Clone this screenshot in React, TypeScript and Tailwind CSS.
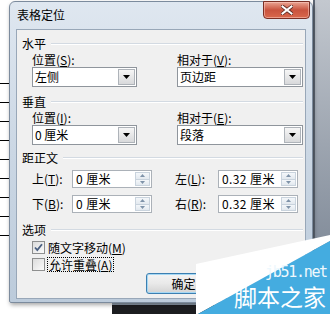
import React from 'react';

function Key({ k }: { k: string }) {
    return (
        <>
            (<span className="underline underline-offset-1">{k}</span>)
        </>
    );
}

function Group({ title, className }: { title: string; className: string }) {
    return (
        <div className={`flex h-[14px] items-center pl-[5px] pr-[2px] leading-[14px] ${className}`}>
            <span>{title}</span>
            <span className="ml-[5px] h-[2px] flex-1 border-t border-b border-t-[#d3dae2] border-b-white" />
        </div>
    );
}

function Combo({ value, width }: { value: string; width: string }) {
    return (
        <div className={`flex h-[20px] items-stretch border border-[#8f959c] bg-white ${width}`}>
            <span className="flex-1 pl-[2px] leading-[18px]">{value}</span>
            <span className="m-px flex w-[17px] items-center justify-center border border-[#aeb3b9] bg-gradient-to-b from-[#f6f6f6] to-[#d8d9db]">
                <svg width="7" height="4" viewBox="0 0 7 4">
                    <path d="M0 0h7L3.5 4z" fill="#000" />
                </svg>
            </span>
        </div>
    );
}

function Spin({ value }: { value: string }) {
    return (
        <div className="flex h-[18px] w-[80px] border border-[#abb1b8] bg-white">
            <span className="flex-1 pl-[3px] leading-[16px] tracking-[0.4px]">{value}</span>
            <span className="my-px mr-px flex w-[15px] flex-col">
                <span className="flex flex-1 items-center justify-center border border-[#c9d3dd] bg-gradient-to-b from-[#f4f7fa] to-[#e3e9ef]">
                    <svg width="5" height="3" viewBox="0 0 5 3">
                        <path d="M0 3h5L2.5 0z" fill="#7f93a9" />
                    </svg>
                </span>
                <span className="flex flex-1 items-center justify-center border border-t-0 border-[#c9d3dd] bg-gradient-to-b from-[#f4f7fa] to-[#e3e9ef]">
                    <svg width="5" height="3" viewBox="0 0 5 3">
                        <path d="M0 0h5L2.5 3z" fill="#7f93a9" />
                    </svg>
                </span>
            </span>
        </div>
    );
}

function Check({ checked }: { checked: boolean }) {
    return (
        <span className="flex h-[13px] w-[13px] items-center justify-center border border-[#8e8f8f] bg-gradient-to-br from-[#dcdcdc] to-[#fbfbfb]">
            {checked && (
                <svg width="9" height="9" viewBox="0 0 9 9">
                    <path d="M1 4.5l2.3 2.6L8 1.2" fill="none" stroke="#4a5f80" strokeWidth="1.8" />
                </svg>
            )}
        </span>
    );
}

export default function App() {
    const docLines = [0, 1, 2, 3, 4, 5, 6, 7, 8];

    return (
        <div className="relative h-[314px] w-[330px] overflow-hidden bg-white font-['Noto_Sans_CJK_SC','Noto_Sans',sans-serif] text-[12px] text-black">
            {/* document behind the dialog */}
            <div className="flex w-[9px] flex-col pt-[83px]">
                {docLines.map((i) => (
                    <div key={i} className="mb-[18px] h-px bg-black" />
                ))}
            </div>

            <div className="absolute right-0 top-0 h-[303px] w-[17px] border-l-2 border-[#5d6673] bg-gradient-to-b from-[#c3c8cf] to-[#75808f]" />
            <div className="absolute bottom-0 left-[112px] right-0 h-[11px] border-t-2 border-[#8d9bab] bg-[#1c1d20]" />

            {/* dialog window */}
            <div className="absolute left-[9px] top-[1px] h-[302px] w-[304px] rounded-t-[6px] rounded-b-[2px] border border-[#7c8b9d] bg-gradient-to-b from-[#dfe7f0] via-[#cbd7e4] to-[#bccbdb] shadow-[1px_2px_4px_rgba(0,0,0,0.35)]">
                <div className="h-[27px] pl-[7px] pt-[6px] leading-[14px]">表格定位</div>

                <div className="absolute right-[2px] top-[-1px] flex h-[18px] w-[47px] items-center justify-center rounded-b-[4px] border border-[#7b2f24] bg-gradient-to-b from-[#e9a493] via-[#c9533e] to-[#d9684c] shadow-[inset_0_0_0_1px_rgba(255,210,200,0.5)]">
                    <svg width="12" height="10" viewBox="0 0 12 10">
                        <path d="M1.5 1.5l9 7M10.5 1.5l-9 7" stroke="#5a2a22" strokeWidth="3.6" strokeLinecap="square" />
                        <path d="M1.5 1.5l9 7M10.5 1.5l-9 7" stroke="#fff" strokeWidth="2" strokeLinecap="square" />
                    </svg>
                </div>

                <div className="mx-[6px] h-[270px] border border-[#98a7b8] bg-[#f0f0f0]">
                    <Group title="水平" className="mt-[7px]" />
                    <div className="mt-[2px] flex h-[14px] pl-[15px] leading-[14px]">
                        <div className="w-[145px]">
                            位置<Key k="S" />:
                        </div>
                        <div>
                            相对于<Key k="V" />:
                        </div>
                    </div>
                    <div className="flex pl-[15px]">
                        <div className="w-[145px]">
                            <Combo value="左侧" width="w-[105px]" />
                        </div>
                        <Combo value="页边距" width="w-[126px]" />
                    </div>

                    <Group title="垂直" className="mt-[8px]" />
                    <div className="mt-[2px] flex h-[14px] pl-[15px] leading-[14px]">
                        <div className="w-[145px]">
                            位置<Key k="I" />:
                        </div>
                        <div>
                            相对于<Key k="E" />:
                        </div>
                    </div>
                    <div className="flex pl-[15px]">
                        <div className="w-[145px]">
                            <Combo value="0 厘米" width="w-[105px]" />
                        </div>
                        <Combo value="段落" width="w-[126px]" />
                    </div>

                    <Group title="距正文" className="mt-[6px]" />
                    <div className="mt-[5px] flex items-center pl-[15px]">
                        <div className="flex w-[143px] items-center">
                            <span className="w-[40px] leading-[14px]">
                                上<Key k="T" />:
                            </span>
                            <Spin value="0 厘米" />
                        </div>
                        <span className="w-[43px] leading-[14px]">
                            左<Key k="L" />:
                        </span>
                        <Spin value="0.32 厘米" />
                    </div>
                    <div className="mt-[7px] flex items-center pl-[15px]">
                        <div className="flex w-[143px] items-center">
                            <span className="w-[40px] leading-[14px]">
                                下<Key k="B" />:
                            </span>
                            <Spin value="0 厘米" />
                        </div>
                        <span className="w-[43px] leading-[14px]">
                            右<Key k="R" />:
                        </span>
                        <Spin value="0.32 厘米" />
                    </div>

                    <Group title="选项" className="mt-[10px]" />
                    <div className="mt-[4px] flex h-[13px] items-center pl-[15px]">
                        <Check checked />
                        <span className="ml-[3px] leading-[13px]">
                            随文字移动<Key k="M" />
                        </span>
                    </div>
                    <div className="mt-[4px] flex h-[13px] items-center pl-[15px]">
                        <Check checked={false} />
                        <span className="ml-[2px] border border-dotted border-black px-px leading-[13px]">
                            允许重叠<Key k="A" />
                        </span>
                    </div>

                    <div className="mt-[2px] flex pl-[129px]">
                        <div className="flex h-[21px] w-[75px] items-center justify-center rounded-[3px] border border-[#3c7fb1] bg-gradient-to-b from-[#f4f4f4] via-[#e9e9e9] to-[#d3d3d3] shadow-[inset_0_0_0_1px_#a6d8f4]">
                            确定
                        </div>
                    </div>
                </div>
            </div>

            {/* watermark */}
            <svg className="pointer-events-none absolute left-0 top-0" width="330" height="314" viewBox="0 0 330 314">
                <polygon points="196,264 330,235 330,241 198,314 196,314" fill="#fff" />
                <polygon points="198,314 330,241 330,314" fill="#44ace0" />
            </svg>
            <div className="pointer-events-none absolute left-[265px] top-[265px] font-['DejaVu_Sans_Mono',monospace] text-[15px] leading-[15px] tracking-[-1.3px] text-[#eef8fd]">
                jb51.net
            </div>
            <div className="pointer-events-none absolute left-[234px] top-[285px] text-[23px] leading-[23px] text-white">
                脚本之家
            </div>
        </div>
    );
}
